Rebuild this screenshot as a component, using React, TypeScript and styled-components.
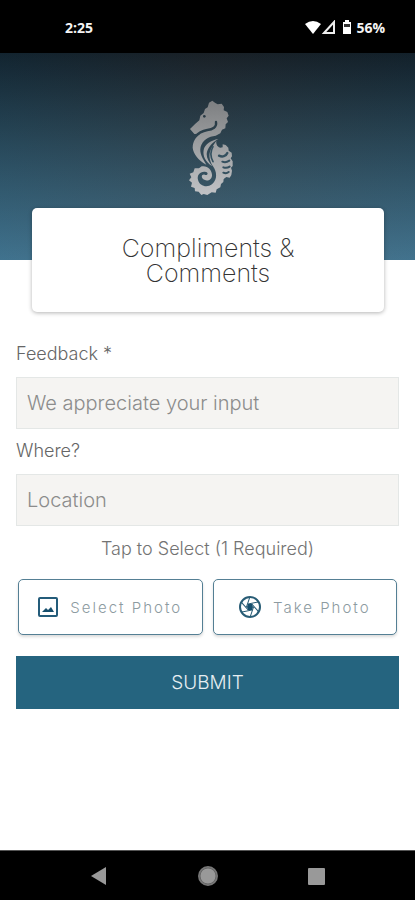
import React from "react";
import styled, { createGlobalStyle } from "styled-components";

const GlobalStyle = createGlobalStyle`
  * { box-sizing: border-box; }
  body { margin: 0; background: #fff; }
  body, button, input { font-family: Inter, "Liberation Sans", sans-serif; font-weight: 300; }
`;

const Screen = styled.div`
  min-height: 100vh;
  display: flex;
  flex-direction: column;
  background: #fff;
`;

const StatusBar = styled.div`
  display: flex;
  align-items: center;
  justify-content: space-between;
  height: 53px;
  padding: 2px 30px 0 65px;
  background: #000;
  color: #f4f4f4;
  font-family: "Open Sans", sans-serif;
  font-size: 14px;
  font-weight: 700;
`;

const StatusIcons = styled.div`
  display: flex;
  align-items: center;
  gap: 4px;
`;

const Hero = styled.header`
  display: flex;
  justify-content: center;
  height: 207px;
  padding: 47px 0 0 6px;
  background:
    linear-gradient(to right, rgba(20, 110, 155, 0.12), rgba(80, 80, 80, 0.12) 50%, rgba(20, 110, 155, 0.08)),
    linear-gradient(#121a21, #2b4452 45%, #46738c);
`;

const TitleCard = styled.div`
  display: flex;
  align-items: center;
  justify-content: center;
  height: 104px;
  margin: -52px 31px 0 32px;
  padding: 2px 64px 0;
  border-radius: 5px;
  background: #fff;
  box-shadow: 0 1px 4px rgba(0, 0, 0, 0.3);
`;

const Title = styled.h1`
  margin: 0;
  color: #333;
  font-size: 25px;
  font-weight: 200;
  line-height: 25px;
  text-align: center;
`;

const Form = styled.form`
  flex: 1;
  display: flex;
  flex-direction: column;
  padding: 32px 16px 0;
`;

const Label = styled.label`
  color: #666;
  font-size: 18px;
  line-height: 20px;
`;

const TextInput = styled.input`
  width: 100%;
  height: 52px;
  margin: 13px 0 12px;
  padding: 0 10px;
  border: 1px solid #e4e7e6;
  border-radius: 0;
  background: #f5f4f2;
  color: #555;
  font-size: 20px;
  &::placeholder { color: #8c8c8c; opacity: 1; }
`;

const Hint = styled.p`
  margin: 0;
  color: #737373;
  font-size: 18px;
  line-height: 22px;
  text-align: center;
`;

const PhotoRow = styled.div`
  display: grid;
  grid-template-columns: 1fr 1fr;
  gap: 10px;
  margin: 19px 2px 21px;
`;

const PhotoButton = styled.button`
  display: flex;
  align-items: center;
  justify-content: center;
  gap: 12px;
  height: 56px;
  padding: 0;
  border: 1px solid #547f94;
  border-radius: 5px;
  background: #fff;
  box-shadow: 0 2px 3px rgba(0, 0, 0, 0.14);
  color: #8d9ba1;
  font-size: 15px;
  letter-spacing: 2px;
`;

const SubmitButton = styled.button`
  height: 53px;
  border: 0;
  background: #25647f;
  color: #e6eef2;
  font-size: 19px;
`;

const NavBar = styled.nav`
  display: flex;
  align-items: center;
  justify-content: space-between;
  height: 50px;
  padding: 0 88px;
  border-top: 1px solid #555;
  background: #000;
`;

const NavButton = styled.button`
  display: flex;
  padding: 0;
  border: 0;
  background: none;
`;

const Seahorse = () => (
  <svg width="46" height="96" viewBox="54 44 138 288" role="img" aria-label="Seahorse">
    <defs>
      <linearGradient id="silver" gradientUnits="userSpaceOnUse" x1="0" y1="44" x2="0" y2="332">
        <stop offset="0" stopColor="#7c7e80" />
        <stop offset="0.5" stopColor="#a0a2a4" />
        <stop offset="1" stopColor="#c2c3c6" />
      </linearGradient>
      <mask id="headCuts" maskUnits="userSpaceOnUse" x="50" y="40" width="150" height="300">
        <rect x="50" y="40" width="150" height="300" fill="#fff" />
        <circle cx="103" cy="93" r="4" />
        <path
          d="M138 110C141 125 128 133 112 134C96 137 85 143 74 155"
          fill="none"
          stroke="#000"
          strokeWidth="7"
          strokeLinecap="round"
        />
      </mask>
    </defs>
    <g fill="url(#silver)">
      <path
        mask="url(#headCuts)"
        d="M60 131L76 115L88 105L91 91L101 83L105 71L113 66L117 52L127 46L136 53L143 57L155 55L162 65L161 75L172 80L176 91L170 99L174 110L167 117L166 129L156 133L151 144L137 151C116 153 98 164 92 184C87 204 99 220 109 238C84 225 70 204 68 187C68 169 77 155 91 145L73 146Z"
      />
      <path d="M145 161C124 173 111 190 110 206C110 220 117 230 127 243C105 229 98 211 101 194C105 176 123 165 145 161Z" />
      <path d="M139 166C137 180 146 186 151 187L158 186L158 177L167 179L175 187L176 196L185 202L186 213L182 219L188 228L188 242L183 247L186 256L184 269L179 277L169 275L161 281L160 290L153 296L151 306L140 312L137 322L125 321L112 329L101 326L94 329L86 319L75 318L74 308L63 304L66 292L57 285L64 276L59 265L70 261L74 249L87 249L95 243C112 240 125 252 126 268C127 283 111 290 100 282C93 277 94 266 104 268C112 272 117 263 108 260C92 256 80 269 84 283C88 302 111 308 126 297C144 282 140 258 129 243C118 226 112 203 129 181Z" />
    </g>
    <g fill="none" stroke="#34505f" strokeLinecap="round">
      <path d="M147 211C157 216 168 213 172 203" strokeWidth="7" />
      <path d="M157 229Q168 233 178 226" strokeWidth="6" />
      <path d="M160 246Q170 250 179 244" strokeWidth="6" />
      <path d="M160 262Q169 266 176 260" strokeWidth="6" />
      <path d="M129 184C119 201 123 218 129 229" strokeWidth="5" />
    </g>
  </svg>
);

const SignalIcons = () => (
  <svg width="47" height="15" viewBox="0 0 47 15" aria-hidden="true">
    <path d="M0 4Q8-2 16 4L8 14Z" fill="#fff" />
    <path d="M19 13L29 2V13Z" fill="none" stroke="#eee" strokeWidth="2" />
    <path d="M38 2H40V0H44V2H46V14H38Z" fill="#fff" />
    <path d="M39 4H45V7H39Z" fill="#333" />
  </svg>
);

const PictureIcon = () => (
  <svg width="20" height="20" viewBox="0 0 20 20" aria-hidden="true">
    <rect x="1" y="1" width="18" height="18" rx="1" fill="none" stroke="#245c7a" strokeWidth="2" />
    <path d="M4 15L8 11L10 13L13 10L16 15Z" fill="#174f6d" />
  </svg>
);

const ApertureIcon = () => (
  <svg width="22" height="22" viewBox="0 0 22 22" aria-hidden="true">
    <circle cx="11" cy="11" r="10" fill="none" stroke="#285c75" strokeWidth="2" />
    <g fill="none" stroke="#285c75" strokeWidth="1">
      {[0, 60, 120, 180, 240, 300].map((angle) => (
        <path key={angle} d="M9 8L14 7L19 6" transform={`rotate(${angle} 11 11)`} />
      ))}
    </g>
    <path d="M9 8H13L14 11L13 14H9L8 11Z" fill="#174f6d" />
  </svg>
);

export default function App() {
  return (
    <Screen>
      <GlobalStyle />
      <StatusBar>
        <span>2:25</span>
        <StatusIcons>
          <SignalIcons />
          <span>56%</span>
        </StatusIcons>
      </StatusBar>
      <Hero><Seahorse /></Hero>
      <TitleCard><Title>Compliments &amp; Comments</Title></TitleCard>
      <Form onSubmit={(event) => event.preventDefault()}>
        <Label htmlFor="feedback">Feedback *</Label>
        <TextInput id="feedback" placeholder="We appreciate your input" />
        <Label htmlFor="location">Where?</Label>
        <TextInput id="location" placeholder="Location" />
        <Hint>Tap to Select (1 Required)</Hint>
        <PhotoRow>
          <PhotoButton type="button"><PictureIcon />Select Photo</PhotoButton>
          <PhotoButton type="button"><ApertureIcon />Take Photo</PhotoButton>
        </PhotoRow>
        <SubmitButton type="submit">SUBMIT</SubmitButton>
      </Form>
      <NavBar>
        <NavButton aria-label="Back">
          <svg width="20" height="20" viewBox="0 0 20 20"><path d="M3 10L18 1V19Z" fill="#999" /></svg>
        </NavButton>
        <NavButton aria-label="Home">
          <svg width="20" height="20" viewBox="0 0 20 20">
            <circle cx="10" cy="10" r="9" fill="#999" stroke="#777" strokeWidth="2" />
            <circle cx="10" cy="10" r="8" fill="none" stroke="#666" strokeWidth="1" />
          </svg>
        </NavButton>
        <NavButton aria-label="Recent apps">
          <svg width="20" height="20" viewBox="0 0 20 20"><rect x="1" y="2" width="17" height="17" rx="1" fill="#999" /></svg>
        </NavButton>
      </NavBar>
    </Screen>
  );
}
